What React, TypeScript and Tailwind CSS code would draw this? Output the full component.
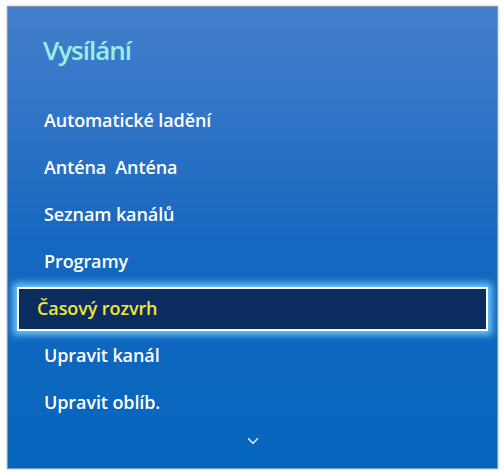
import { ChevronDown } from "lucide-react";

const items = [
  "Automatické ladění",
  "Anténa  Anténa",
  "Seznam kanálů",
  "Programy",
  "Časový rozvrh",
  "Upravit kanál",
  "Upravit oblíb.",
];

const SELECTED = 4;

export default function App() {
  return (
    <div className="w-[504px] h-[473px] bg-white p-[6px] pb-[4px] pl-[7px] pr-[6px]" style={{ fontFamily: '"Open Sans", "Noto Sans", sans-serif' }}>
      {/* Panel */}
      <div className="h-full flex flex-col border border-[#7f97b8] bg-gradient-to-b from-[#437fcc] via-[#1568c0] to-[#0565bd] shadow-[0_0_2px_rgba(0,0,0,0.35)]">
        <div className="pl-[35px] pt-[30px] h-[88px]">
          <h1 className="text-[26px] font-semibold text-[#98f0e4] tracking-[-1px] leading-none">Vysílání</h1>
        </div>
        <ul className="flex flex-col pt-[2px]">
          {items.map((item, i) =>
            i === SELECTED ? (
              <li key={item} className="h-[47px] flex items-center px-[9px]">
                <div className="w-full h-[44px] flex items-center pl-[18px] bg-[#0b2c5e] border-2 border-white shadow-[0_0_7px_4px_rgba(120,210,255,0.9)]">
                  <span className="text-[18px] font-semibold text-[#f2e63a] tracking-[-0.1px]">{item}</span>
                </div>
              </li>
            ) : (
              <li key={item} className="h-[47px] flex items-center pl-[36px]">
                <span className="text-[18px] font-semibold text-white tracking-[-0.1px] whitespace-pre">{item}</span>
              </li>
            )
          )}
        </ul>
        <div className="flex justify-center pt-[6px]">
          <ChevronDown className="w-[20px] h-[18px] text-[#cfe6ff]" strokeWidth={2.25} />
        </div>
      </div>
    </div>
  );
}
